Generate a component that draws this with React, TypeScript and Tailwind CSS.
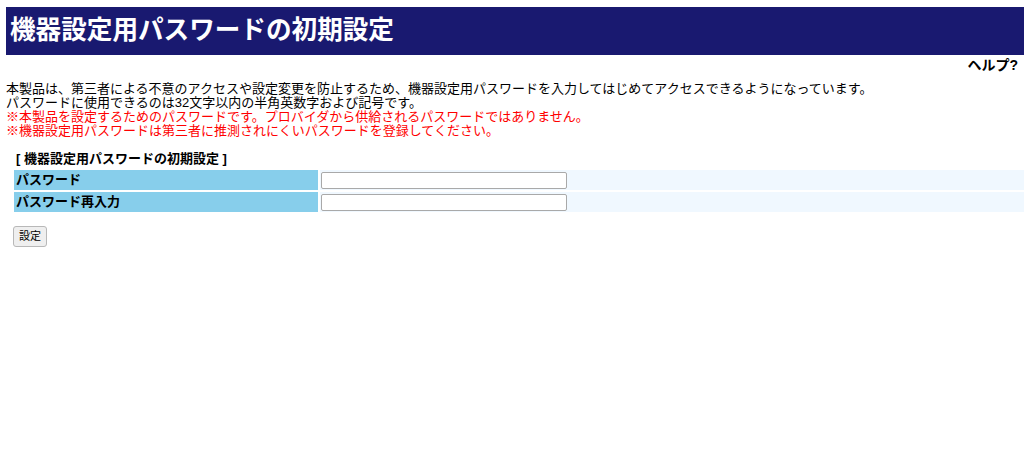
import React from 'react';

const font = { fontFamily: '"Liberation Sans", "Noto Sans CJK JP", sans-serif' };

const rows = ['パスワード', 'パスワード再入力'];

export default function App() {
  return (
    <div className="min-h-screen bg-white pl-[6px] pt-[7px] text-[13px] text-black" style={font}>
      {/* タイトル */}
      <div className="flex h-[48px] items-center bg-[#191970] pl-[4px] text-[25.6px] font-bold leading-none text-white">
        機器設定用パスワードの初期設定
      </div>

      <div className="pr-[6px] pt-[2px] text-right text-[14px] font-bold leading-[16px]">ヘルプ?</div>

      <div className="mt-[9px] leading-[14px]">
        <div>本製品は、第三者による不意のアクセスや設定変更を防止するため、機器設定用パスワードを入力してはじめてアクセスできるようになっています。</div>
        <div>パスワードに使用できるのは32文字以内の半角英数字および記号です。</div>
        <div className="text-[#ff0000]">※本製品を設定するためのパスワードです。プロバイダから供給されるパスワードではありません。</div>
        <div className="text-[#ff0000]">※機器設定用パスワードは第三者に推測されにくいパスワードを登録してください。</div>
      </div>

      <div className="mt-[13px] pl-[10px] font-bold leading-[16px]">[ 機器設定用パスワードの初期設定 ]</div>

      <div className="ml-[8px] mt-[3px] grid grid-cols-[304px_1fr] gap-x-[2px] gap-y-[2px]">
        {rows.map((label) => (
          <React.Fragment key={label}>
            <div className="flex h-[20px] items-center bg-[#87ceeb] pl-[2px] font-bold">{label}</div>
            <div className="flex h-[20px] items-center bg-[#f0f8ff] pl-[1px]">
              <input
                type="password"
                className="h-[17px] w-[246px] rounded-[2px] border border-[#a9a9a9] bg-white outline-none"
              />
            </div>
          </React.Fragment>
        ))}
      </div>

      <button className="ml-[7px] mt-[14px] h-[21px] w-[34px] rounded-[3px] border border-[#b8b8b8] bg-[#efefef] text-[11px] leading-none text-black">
        設定
      </button>
    </div>
  );
}
